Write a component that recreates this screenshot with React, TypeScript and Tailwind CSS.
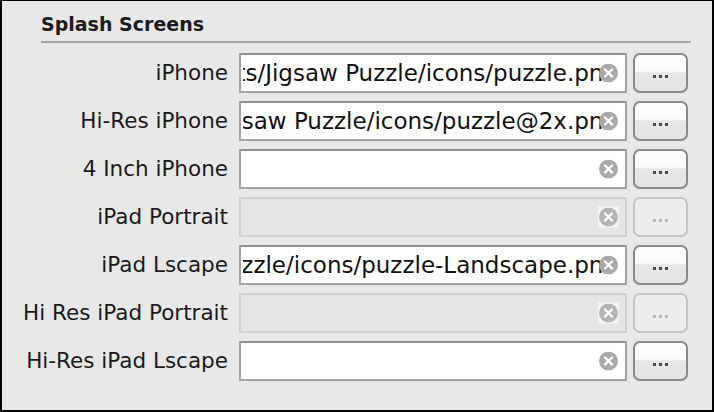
import React from "react";

type Row = { label: string; value?: string; disabled?: boolean };

const rows: Row[] = [
  { label: "iPhone", value: "/Users/developer/Projects/Jigsaw Puzzle/icons/puzzle.png" },
  { label: "Hi-Res iPhone", value: "/Users/developer/Projects/Jigsaw Puzzle/icons/puzzle@2x.png" },
  { label: "4 Inch iPhone", value: "" },
  { label: "iPad Portrait", disabled: true },
  { label: "iPad Lscape", value: "/Users/developer/Projects/Jigsaw Puzzle/icons/puzzle-Landscape.png" },
  { label: "Hi Res iPad Portrait", disabled: true },
  { label: "Hi-Res iPad Lscape", value: "" },
];

function ClearIcon({ disabled }: { disabled?: boolean }) {
  return (
    <div
      className={
        "absolute right-[6px] top-1/2 -translate-y-1/2 w-[21px] h-[21px] flex items-center justify-center " +
        (disabled ? "bg-[#f4f4f4]" : "")
      }
    >
      <svg width="19" height="19" viewBox="0 0 19 19">
        <circle cx="9.5" cy="9.5" r="9.5" fill={disabled ? "#b4b4b4" : "#a9a9a9"} />
        <path d="M6 6 L13 13 M13 6 L6 13" stroke="#ffffff" strokeWidth="2.2" strokeLinecap="round" />
      </svg>
    </div>
  );
}

function Dots({ disabled }: { disabled?: boolean }) {
  const c = disabled ? "bg-[#b8b8b8]" : "bg-[#4a4a4a]";
  return (
    <div className="flex gap-[3px] mt-[6px]">
      <div className={"w-[3px] h-[3px] " + c} />
      <div className={"w-[3px] h-[3px] " + c} />
      <div className={"w-[3px] h-[3px] " + c} />
    </div>
  );
}

function FieldRow({ row }: { row: Row }) {
  const { label, value, disabled } = row;
  return (
    <div className="flex items-center h-[40px]">
      <div className="w-[226px] text-right text-[21.5px] leading-[24px] text-[#1a1a1a] whitespace-nowrap">
        {label}
      </div>
      <div
        className={
          "relative ml-[11px] w-[388px] h-[40px] border-2 " +
          (disabled
            ? "bg-[#e4e4e4] border-[#d0d0d0]"
            : "bg-white border-[#a3a3a3] border-t-[#8e8e8e]")
        }
      >
        {!disabled && value && (
          <div className="absolute left-[2px] right-[21px] top-0 bottom-0 overflow-hidden flex justify-end items-center">
            <span className="whitespace-nowrap text-[23px] leading-[26px] text-[#111] mr-[-14px] shrink-0">
              {value}
            </span>
          </div>
        )}
        <ClearIcon disabled={disabled} />
      </div>
      <div
        className={
          "ml-[6px] w-[55px] h-[40px] rounded-[7px] border-2 flex items-center justify-center " +
          (disabled
            ? "border-[#c4c4c4] bg-[#ececec]"
            : "border-[#8a8a8a] bg-[linear-gradient(to_bottom,#ffffff_0%,#fbfbfb_45%,#e6e6e6_50%,#e4e4e4_100%)]")
        }
      >
        <Dots disabled={disabled} />
      </div>
    </div>
  );
}

export default function App() {
  return (
    <div
      className="w-[714px] h-[412px] bg-[#e8e8e8] border-black border-l-2 border-r-2 border-b-2 border-t overflow-hidden"
      style={{ fontFamily: '"DejaVu Sans", "Liberation Sans", sans-serif' }}
    >
      <div className="pl-[39px] pt-[12px] w-[689px]">
        <div className="text-[19px] leading-[22px] font-bold text-[#1c1c1c]">Splash Screens</div>
        <div className="mt-[6px] h-[2px] bg-[#a8a8a8]" />
      </div>
      <div className="mt-[10px] flex flex-col gap-[8px]">
        {rows.map((r) => (
          <FieldRow key={r.label} row={r} />
        ))}
      </div>
    </div>
  );
}
